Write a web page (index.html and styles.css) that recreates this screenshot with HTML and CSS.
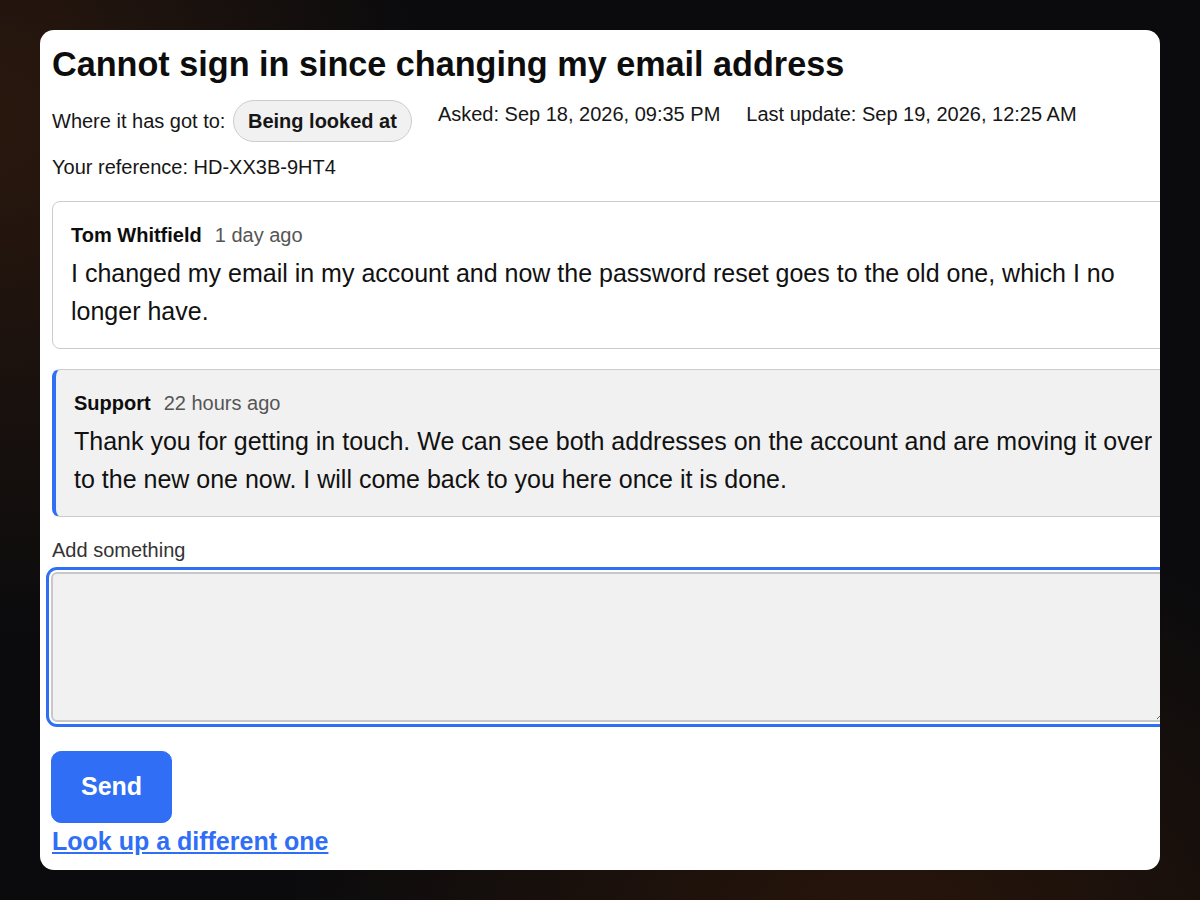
FILE: index.html
```html
<!DOCTYPE html>
<html lang="en">
<head>
<meta charset="utf-8">
<title>Cannot sign in since changing my email address</title>
<link rel="stylesheet" href="styles.css">
</head>
<body>
<main class="card">
  <h1 class="title">Cannot sign in since changing my email address</h1>
  <div class="meta">
    <span class="meta-item">Where it has got to: <span class="badge">Being looked at</span></span>
    <span class="meta-item">Asked: Sep 18, 2026, 09:35 PM</span>
    <span class="meta-item">Last update: Sep 19, 2026, 12:25 AM</span>
  </div>
  <p class="reference">Your reference: HD-XX3B-9HT4</p>

  <section class="thread">
    <article class="message">
      <header class="message-head">
        <span class="author">Tom Whitfield</span>
        <span class="when">1 day ago</span>
      </header>
      <p class="message-body">I changed my email in my account and now the password reset goes to the old one, which I no longer have.</p>
    </article>
    <article class="message message-staff">
      <header class="message-head">
        <span class="author">Support</span>
        <span class="when">22 hours ago</span>
      </header>
      <p class="message-body">Thank you for getting in touch. We can see both addresses on the account and are moving it over to the new one now. I will come back to you here once it is done.</p>
    </article>
  </section>

  <form class="reply">
    <label class="reply-label" for="reply-text">Add something</label>
    <textarea id="reply-text" class="reply-box is-focused"></textarea>
    <button type="button" class="send">Send</button>
  </form>
  <a class="lookup" href="#">Look up a different one</a>
</main>
</body>
</html>
```

FILE: styles.css
```css
html, body {
  margin: 0;
  padding: 0;
}

body {
  width: 1200px;
  height: 900px;
  box-sizing: border-box;
  padding: 30px 40px;
  font-family: "Liberation Sans", Arial, sans-serif;
  font-size: 20px;
  line-height: 1.4;
  color: #161616;
  background-color: #0b0b0d;
  background-image:
    radial-gradient(ellipse 420px 520px at 0px 120px, rgba(52, 28, 14, 0.75), rgba(52, 28, 14, 0) 100%),
    radial-gradient(ellipse 600px 420px at 880px 940px, rgba(48, 24, 10, 0.8), rgba(48, 24, 10, 0) 100%);
  overflow: hidden;
}

.card {
  display: block;
  height: 840px;
  box-sizing: border-box;
  padding: 12px;
  background: #ffffff;
  border-radius: 14px;
  overflow: hidden;
}

.title {
  margin: 0 0 14px;
  font-size: 34.2px;
  line-height: 1.3;
  font-weight: 700;
  color: #0d0d0d;
}

.meta {
  display: flex;
  flex-wrap: wrap;
  align-items: flex-start;
  column-gap: 26px;
  row-gap: 8px;
  margin: 0 0 11px;
}

.badge {
  display: inline-block;
  margin-left: 2px;
  padding: 6px 14px;
  border: 1px solid #cccccc;
  border-radius: 999px;
  background: #f1f1f1;
  font-weight: 700;
  color: #161616;
}

.reference {
  margin: 0 0 20px;
}

.thread {
  display: flex;
  flex-direction: column;
  gap: 20px;
}

.message {
  width: 100%;
  padding: 19px 18px 18px;
  border: 1px solid #cccccc;
  border-radius: 8px;
  background: #ffffff;
}

.message-staff {
  background: #f1f1f1;
  border-left: 4px solid #2f6ef5;
}

.message-head {
  display: flex;
  align-items: baseline;
  gap: 13px;
  margin-bottom: 6px;
}

.author {
  font-weight: 700;
  color: #0d0d0d;
}

.when {
  color: #555555;
}

.message-body {
  margin: 0;
  font-size: 25px;
  line-height: 1.5;
  color: #111111;
}

.reply {
  display: flex;
  flex-direction: column;
  align-items: flex-start;
  margin: 19px 0 0;
}

.reply-label {
  display: block;
  margin-bottom: 8px;
  color: #333333;
}

.reply-box {
  display: block;
  width: 100%;
  height: 130px;
  margin: 0 0 0 -1px;
  padding: 8px;
  border: 2px solid #c8c8c8;
  border-radius: 6px;
  background: #f1f1f1;
  font-family: "Liberation Sans", Arial, sans-serif;
  font-size: 20px;
  color: #161616;
  resize: vertical;
  outline: none;
}

.reply-box.is-focused {
  box-shadow: 0 0 0 2px #ffffff, 0 0 0 5px #2f6ef5;
}

.send {
  margin: 29px 0 0 -1px;
  padding: 16px 29px;
  border: 1px solid #2f6ef5;
  border-radius: 10px;
  background: #2f6ef5;
  color: #ffffff;
  font-family: "Liberation Sans", Arial, sans-serif;
  font-size: 25px;
  line-height: 1.5;
  font-weight: 700;
  cursor: pointer;
}

.lookup {
  display: inline-block;
  font-size: 25px;
  line-height: 1.5;
  font-weight: 700;
  color: #2f6ef5;
  text-decoration: underline;
}
```
